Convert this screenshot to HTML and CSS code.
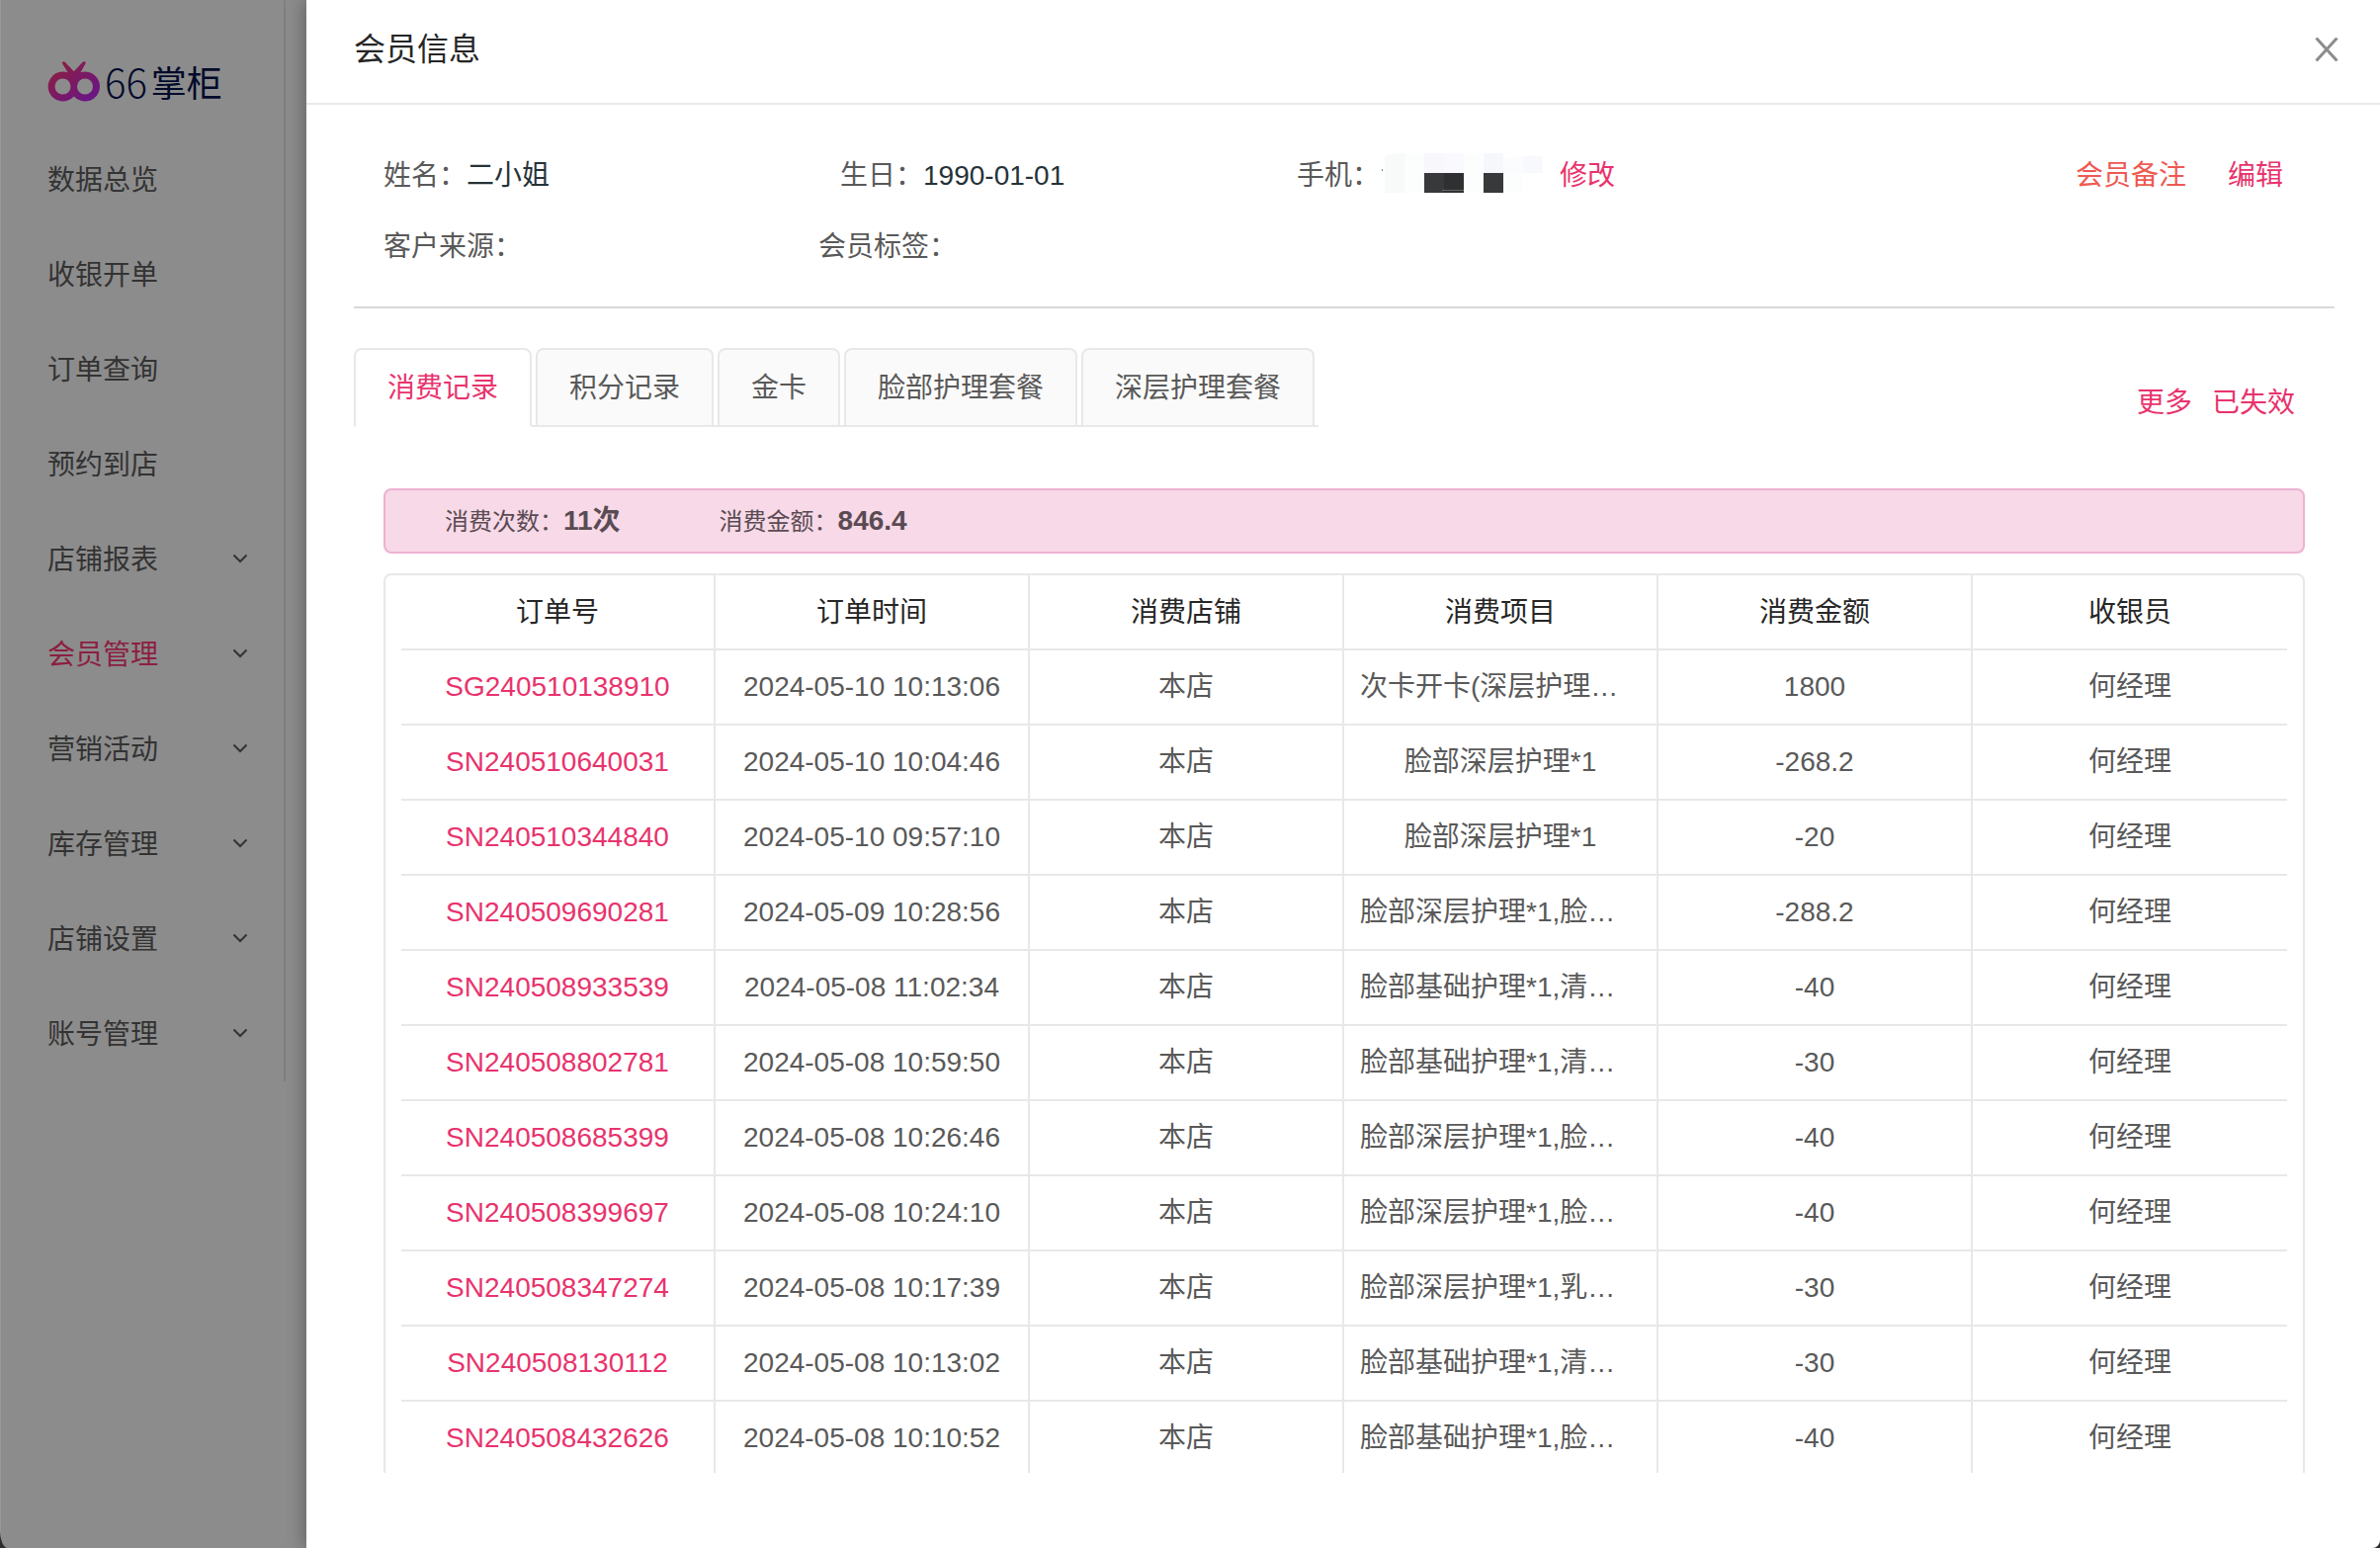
FILE: index.html
```html
<!DOCTYPE html>
<html lang="zh-CN">
<head>
<meta charset="utf-8">
<title>会员信息</title>
<link rel="stylesheet" href="styles.css">
</head>
<body>
<div class="app">
  <aside class="side">
    <div class="side-inner">
      <a class="logo" href="#">
        <svg class="logo-mark" viewBox="0 0 54 42" aria-hidden="true">
          <defs>
            <linearGradient id="brand" x1="0" y1="0" x2="1" y2="1">
              <stop offset="0.1" stop-color="#8c1f3f"/>
              <stop offset="1" stop-color="#66148f"/>
            </linearGradient>
          </defs>
          <path fill="url(#brand)" fill-rule="evenodd" d="M15.500 11.500C17.500 11.500 19 11.800 20.500 12.300L15.200 3.600C14.300 1.500 16.500 0.300 18 2L26.800 11.300L35.500 2C37 0.300 39.400 1.300 38.400 3.400L33.500 12.300C35 11.700 36.500 11.500 38 11.500A15 15 0 1 1 26.800 36.500A15 15 0 1 1 15.500 11.500ZM15.500 18.500A8 8 0 1 0 15.500 34.500A8 8 0 1 0 15.500 18.500ZM38 18.500A8 8 0 1 0 38 34.500A8 8 0 1 0 38 18.500Z"/>
        </svg>
        <span class="logo-num">66</span><span class="logo-name">掌柜</span>
      </a>
      <nav class="menu">
        <a href="#">数据总览</a>
        <a href="#">收银开单</a>
        <a href="#">订单查询</a>
        <a href="#">预约到店</a>
        <a href="#">店铺报表<svg viewBox="0 0 16 14"><path d="M1.500 1.500L8 8L14.500 1.500"/></svg></a>
        <a href="#" class="active">会员管理<svg viewBox="0 0 16 14"><path d="M1.500 1.500L8 8L14.500 1.500"/></svg></a>
        <a href="#">营销活动<svg viewBox="0 0 16 14"><path d="M1.500 1.500L8 8L14.500 1.500"/></svg></a>
        <a href="#">库存管理<svg viewBox="0 0 16 14"><path d="M1.500 1.500L8 8L14.500 1.500"/></svg></a>
        <a href="#">店铺设置<svg viewBox="0 0 16 14"><path d="M1.500 1.500L8 8L14.500 1.500"/></svg></a>
        <a href="#">账号管理<svg viewBox="0 0 16 14"><path d="M1.500 1.500L8 8L14.500 1.500"/></svg></a>
      </nav>
    </div>
  </aside>

  <main class="drawer">
    <header class="drawer-head">
      <h1>会员信息</h1>
      <button class="close" type="button" aria-label="关闭">
        <svg viewBox="0 0 24 24"><path d="M1.500 0.500L22.500 23.500M22.500 0.500L1.500 23.500"/></svg>
      </button>
    </header>

    <div class="drawer-body">
      <section class="profile">
        <div class="profile-row">
          <div class="field wide">姓名：<span class="value">二小姐</span></div>
          <div class="field wide">生日：<span class="value">1990-01-01</span></div>
          <div class="field phone">手机：
            <svg class="mask" viewBox="0 0 170 44" aria-hidden="true">
              <path fill="#888" d="M0 17h1v2h-1z"/>
              <path fill="#f8fafa" d="M3 4q6-3 20-3v40H3z"/>
              <path fill="#fcfefd" d="M23 1h20v40H23zM83 1h20v40H83zM103 21h40v20h-40z"/>
              <path fill="#f8f8fc" d="M43 1h20v20H43z"/>
              <path fill="#fafafe" d="M63 1h20v20H63z"/>
              <path fill="#fbfcfd" d="M123 7q10-2 20-3v17h-20z"/>
              <path fill="#f8f9fc" d="M143 4q12-2 20 1v16h-20z"/>
              <path fill="#f6f7fa" d="M103 1h20v20h-20z"/>
              <path fill="#38393b" d="M43 21h20v20H43zM103 21h20v20h-20z"/>
              <path fill="#2f3032" d="M63 21h20v20H63z"/>
              <path fill="#666" d="M61 38h22v1H61z"/>
            </svg>
            <a class="link" href="#">修改</a>
          </div>
          <div class="profile-actions">
            <a class="link note" href="#">会员备注</a>
            <a class="link" href="#">编辑</a>
          </div>
        </div>
        <div class="profile-row">
          <div class="field">客户来源：</div>
          <div class="field">会员标签：</div>
        </div>
      </section>

      <div class="tab-bar">
        <div class="tabs" role="tablist">
          <button class="tab selected" role="tab" type="button" aria-selected="true">消费记录</button>
          <button class="tab" role="tab" type="button">积分记录</button>
          <button class="tab" role="tab" type="button">金卡</button>
          <button class="tab" role="tab" type="button">脸部护理套餐</button>
          <button class="tab" role="tab" type="button">深层护理套餐</button>
        </div>
        <div class="tab-links">
          <a class="link" href="#">更多</a>
          <a class="link" href="#">已失效</a>
        </div>
      </div>

      <section class="records">
        <div class="summary">
          <div>消费次数：<strong>11次</strong></div>
          <div>消费金额：<strong>846.4</strong></div>
        </div>
        <div class="table-box">
          <table>
            <thead>
              <tr><th>订单号</th><th>订单时间</th><th>消费店铺</th><th>消费项目</th><th>消费金额</th><th>收银员</th></tr>
            </thead>
            <tbody>
              <tr><td><a class="link" href="#">SG240510138910</a></td><td>2024-05-10 10:13:06</td><td>本店</td><td class="cut">次卡开卡(深层护理…</td><td>1800</td><td>何经理</td></tr>
              <tr><td><a class="link" href="#">SN240510640031</a></td><td>2024-05-10 10:04:46</td><td>本店</td><td>脸部深层护理*1</td><td>-268.2</td><td>何经理</td></tr>
              <tr><td><a class="link" href="#">SN240510344840</a></td><td>2024-05-10 09:57:10</td><td>本店</td><td>脸部深层护理*1</td><td>-20</td><td>何经理</td></tr>
              <tr><td><a class="link" href="#">SN240509690281</a></td><td>2024-05-09 10:28:56</td><td>本店</td><td class="cut">脸部深层护理*1,脸…</td><td>-288.2</td><td>何经理</td></tr>
              <tr><td><a class="link" href="#">SN240508933539</a></td><td>2024-05-08 11:02:34</td><td>本店</td><td class="cut">脸部基础护理*1,清…</td><td>-40</td><td>何经理</td></tr>
              <tr><td><a class="link" href="#">SN240508802781</a></td><td>2024-05-08 10:59:50</td><td>本店</td><td class="cut">脸部基础护理*1,清…</td><td>-30</td><td>何经理</td></tr>
              <tr><td><a class="link" href="#">SN240508685399</a></td><td>2024-05-08 10:26:46</td><td>本店</td><td class="cut">脸部深层护理*1,脸…</td><td>-40</td><td>何经理</td></tr>
              <tr><td><a class="link" href="#">SN240508399697</a></td><td>2024-05-08 10:24:10</td><td>本店</td><td class="cut">脸部深层护理*1,脸…</td><td>-40</td><td>何经理</td></tr>
              <tr><td><a class="link" href="#">SN240508347274</a></td><td>2024-05-08 10:17:39</td><td>本店</td><td class="cut">脸部深层护理*1,乳…</td><td>-30</td><td>何经理</td></tr>
              <tr><td><a class="link" href="#">SN240508130112</a></td><td>2024-05-08 10:13:02</td><td>本店</td><td class="cut">脸部基础护理*1,清…</td><td>-30</td><td>何经理</td></tr>
              <tr><td><a class="link" href="#">SN240508432626</a></td><td>2024-05-08 10:10:52</td><td>本店</td><td class="cut">脸部基础护理*1,脸…</td><td>-40</td><td>何经理</td></tr>
            </tbody>
          </table>
        </div>
      </section>
    </div>
  </main>
</div>
</body>
</html>
```

FILE: styles.css
```css
* {
  box-sizing: border-box;
}

body {
  margin: 0;
  background: #2c2c30;
  font-family: "Liberation Sans", "Noto Sans CJK SC", sans-serif;
  font-size: 28px;
  line-height: 40px;
  color: #595959;
}

a {
  color: inherit;
  text-decoration: none;
}

button {
  font: inherit;
  color: inherit;
  margin: 0;
  cursor: pointer;
}

.app {
  display: flex;
  min-height: 100vh;
  background: #8c8c8c;
  border-left: 1px solid #989898;
  border-radius: 0 0 8px 8px / 0 0 8px 18px;
  overflow: hidden;
}

/* Sidebar, dimmed behind the drawer */
.side {
  flex: 0 0 309px;
  color: #333;
}

.side-inner {
  width: 288px;
  border-right: 2px solid #7f7f7f;
}

.logo {
  display: flex;
  align-items: center;
  height: 134px;
  padding: 30px 0 0 47px;
  color: #020a2b;
  font-family: "Noto Sans CJK SC", sans-serif;
  font-weight: 300;
}

.logo-mark {
  width: 54px;
  height: 42px;
  margin-right: 4px;
}

.logo-num {
  margin-right: 4px;
  font-size: 40px;
}

.logo-name {
  font-size: 36px;
  font-weight: 400;
}

.menu a {
  display: flex;
  align-items: center;
  justify-content: space-between;
  height: 96px;
  padding: 2px 36px 0 47px;
}

.menu .active {
  color: #8c1f42;
}

.menu svg {
  width: 16px;
  height: 14px;
  fill: none;
  stroke: #333;
  stroke-width: 2;
}

/* Drawer */
.drawer {
  flex: 1;
  min-width: 0;
  background: #fff;
  box-shadow: -4px 0 16px rgba(0, 0, 0, 0.25);
}

.drawer-head {
  display: flex;
  align-items: center;
  justify-content: space-between;
  height: 106px;
  padding: 0 38px 4px 48px;
  border-bottom: 2px solid #e8e8e8;
}

.drawer-head h1 {
  margin: 0;
  font-size: 32px;
  font-weight: 400;
  color: #262626;
}

.close {
  display: flex;
  padding: 4px;
  border: 0;
  background: none;
}

.close svg {
  width: 24px;
  height: 24px;
  fill: none;
  stroke: #8c8c8c;
  stroke-width: 3;
}

.drawer-body {
  padding: 36px 46px 76px 48px;
}

.profile {
  padding: 0 30px 24px;
  border-bottom: 2px solid #d9d9d9;
}

.profile-row {
  display: flex;
  align-items: center;
  height: 72px;
}

.field {
  flex: 0 0 440px;
}

.field.wide {
  flex-basis: 462px;
}

.value {
  color: #263238;
}

.phone {
  display: flex;
  align-items: center;
}

.mask {
  width: 170px;
  height: 44px;
  margin: 0 10px 4px 2px;
}

.link {
  color: #e8336d;
}

.note {
  color: #ee5a52;
}

.profile-actions {
  display: flex;
  gap: 42px;
  margin-left: auto;
  padding-right: 22px;
}

.tab-bar {
  display: flex;
  justify-content: space-between;
  align-items: flex-start;
  padding: 40px 40px 0 0;
}

.tabs {
  display: flex;
  gap: 4px;
  padding-right: 4px;
  background: linear-gradient(#e8e8e8, #e8e8e8) bottom / 100% 2px no-repeat;
}

.tab {
  height: 80px;
  padding: 2px 32px 0;
  border: 2px solid #e8e8e8;
  border-radius: 8px 8px 0 0;
  background: #fafafa;
}

.tab.selected {
  background: #fff;
  border-bottom-color: #fff;
  color: #e8336d;
}

.tab-links {
  display: flex;
  gap: 20px;
  padding-top: 36px;
}

.records {
  padding: 62px 30px 0;
}

.summary {
  display: flex;
  gap: 100px;
  align-items: center;
  height: 66px;
  padding: 0 60px;
  border: 2px solid #edb2d2;
  border-radius: 8px;
  background: #f7d9e7;
  font-size: 24px;
  color: #5a4b53;
}

.summary strong {
  font-size: 28px;
}

.table-box {
  margin-top: 20px;
  padding: 0 16px;
  border: 2px solid #e8e8e8;
  border-bottom: 0;
  border-radius: 8px 8px 0 0;
}

table {
  width: 100%;
  table-layout: fixed;
  border-collapse: separate;
  border-spacing: 0;
}

th,
td {
  height: 76px;
  padding: 0 16px;
  border-right: 2px solid #e8e8e8;
  border-bottom: 2px solid #e8e8e8;
  font-weight: 400;
  text-align: center;
  white-space: nowrap;
}

th {
  padding-top: 2px;
  color: #262626;
}

th:last-child,
td:last-child {
  border-right: 0;
}

tbody tr:last-child td {
  height: 72px;
  padding-top: 2px;
  border-bottom: 0;
}

td.cut {
  text-align: left;
}
```
